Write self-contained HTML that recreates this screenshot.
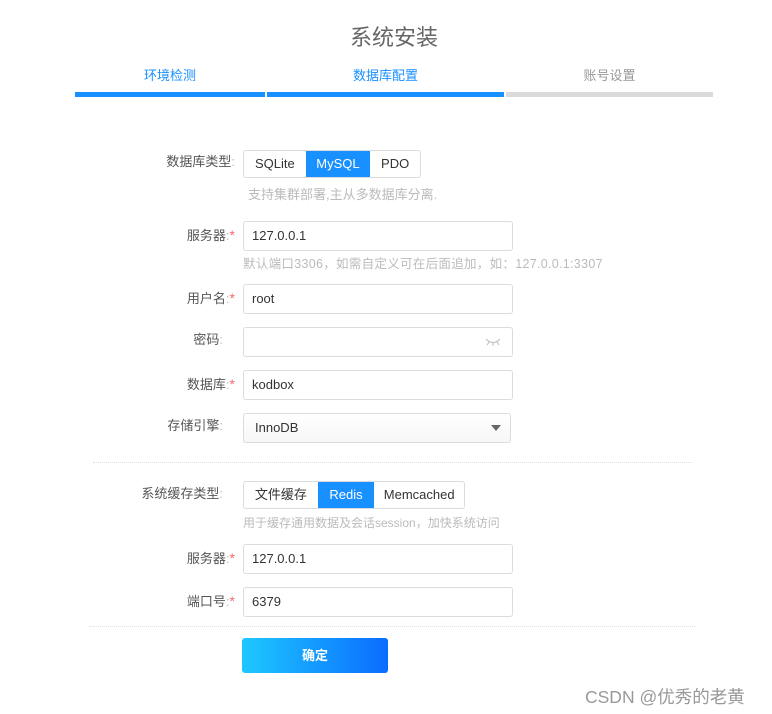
<!DOCTYPE html>
<html><head><meta charset="utf-8"><style>
*{margin:0;padding:0;box-sizing:border-box}
body{width:772px;height:714px;background:#fff;position:relative;font-family:"Liberation Sans","Noto Sans CJK SC",sans-serif;color:#333;overflow:hidden}
.a{position:absolute}
.lbl{position:absolute;right:537px;font-size:13px;color:#555;line-height:16px;white-space:nowrap}
.lbl i{font-style:normal;color:#bbb}
.lbl b{font-weight:normal;color:#f56c6c;font-size:14px}
.inp{position:absolute;left:243px;width:270px;height:30px;border:1px solid #dcdcdc;border-radius:3px;font-size:13px;line-height:28px;padding-left:8px;color:#333}
.help{position:absolute;font-size:12px;color:#bbb;white-space:nowrap}
.grp{position:absolute;display:flex;border:1px solid #dcdcdc;border-radius:3px;height:28px;font-size:13px;line-height:26px}
.grp span{text-align:center;color:#333}
.grp .on{background:#1890ff;color:#fff}
.sep{position:absolute;border-top:1px dotted #e0e0e0;height:0}
</style></head><body>
<div class="a" style="left:0;width:788px;top:20px;text-align:center;font-size:22px;color:#666">系统安装</div>
<div class="a" style="left:75px;width:190px;top:65px;text-align:center;font-size:13px;color:#1890ff">环境检测</div>
<div class="a" style="left:267px;width:237px;top:65px;text-align:center;font-size:13px;color:#1890ff">数据库配置</div>
<div class="a" style="left:506px;width:207px;top:65px;text-align:center;font-size:13px;color:#999">账号设置</div>
<div class="a" style="left:75px;width:190px;top:92px;height:5px;background:#1890ff"></div>
<div class="a" style="left:267px;width:237px;top:92px;height:5px;background:#1890ff"></div>
<div class="a" style="left:506px;width:207px;top:92px;height:5px;background:#dadada"></div>

<div class="lbl" style="top:154px">数据库类型<i>:</i></div>
<div class="grp" style="left:243px;top:150px;width:178px"><span style="width:62px">SQLite</span><span class="on" style="width:65px">MySQL</span><span style="width:50px">PDO</span></div>
<div class="help" style="left:248px;top:184px;font-size:13px">支持集群部署,主从多数据库分离.</div>

<div class="lbl" style="top:227px">服务器<i>:</i><b>*</b></div>
<div class="inp" style="top:221px">127.0.0.1</div>
<div class="help" style="left:243px;top:253px;font-size:12.5px;letter-spacing:0.3px">默认端口3306，如需自定义可在后面追加，如：127.0.0.1:3307</div>

<div class="lbl" style="top:290px">用户名<i>:</i><b>*</b></div>
<div class="inp" style="top:284px">root</div>

<div class="lbl" style="top:332px;right:549px">密码<i>:</i></div>
<div class="inp" style="top:327px"></div>
<svg class="a" style="left:485px;top:337px" width="16" height="10" viewBox="0 0 16 10"><path d="M1 2q7 7 14 0M4 5l-2 3M8 6v3M12 5l2 3" stroke="#bbb" fill="none" stroke-width="1"/></svg>

<div class="lbl" style="top:376px">数据库<i>:</i><b>*</b></div>
<div class="inp" style="top:370px">kodbox</div>

<div class="lbl" style="top:418px;right:549px">存储引擎<i>:</i></div>
<div class="inp" style="top:413px;width:268px;background:linear-gradient(#fff,#f7f7f7);padding-left:11px">InnoDB</div>
<div class="a" style="left:491px;top:425px;width:0;height:0;border-left:5px solid transparent;border-right:5px solid transparent;border-top:6px solid #666"></div>

<div class="sep" style="left:93px;width:600px;top:462px"></div>

<div class="lbl" style="top:486px;right:549px">系统缓存类型<i>:</i></div>
<div class="grp" style="left:243px;top:481px;width:222px"><span style="width:74px">文件缓存</span><span class="on" style="width:57px">Redis</span><span style="width:90px">Memcached</span></div>
<div class="help" style="left:243px;top:514px">用于缓存通用数据及会话session，加快系统访问</div>

<div class="lbl" style="top:550px">服务器<i>:</i><b>*</b></div>
<div class="inp" style="top:544px">127.0.0.1</div>
<div class="lbl" style="top:593px">端口号<i>:</i><b>*</b></div>
<div class="inp" style="top:587px">6379</div>

<div class="sep" style="left:89px;width:606px;top:626px"></div>
<div class="a" style="left:242px;top:638px;width:146px;height:35px;border-radius:3px;background:linear-gradient(90deg,#1ec8ff,#0a6cff);color:#fff;font-size:13px;font-weight:bold;text-align:center;line-height:35px">确定</div>
<div class="a" style="left:585px;top:684px;font-size:17.5px;color:#999;white-space:nowrap">CSDN @优秀的老黄</div>
</body></html>
